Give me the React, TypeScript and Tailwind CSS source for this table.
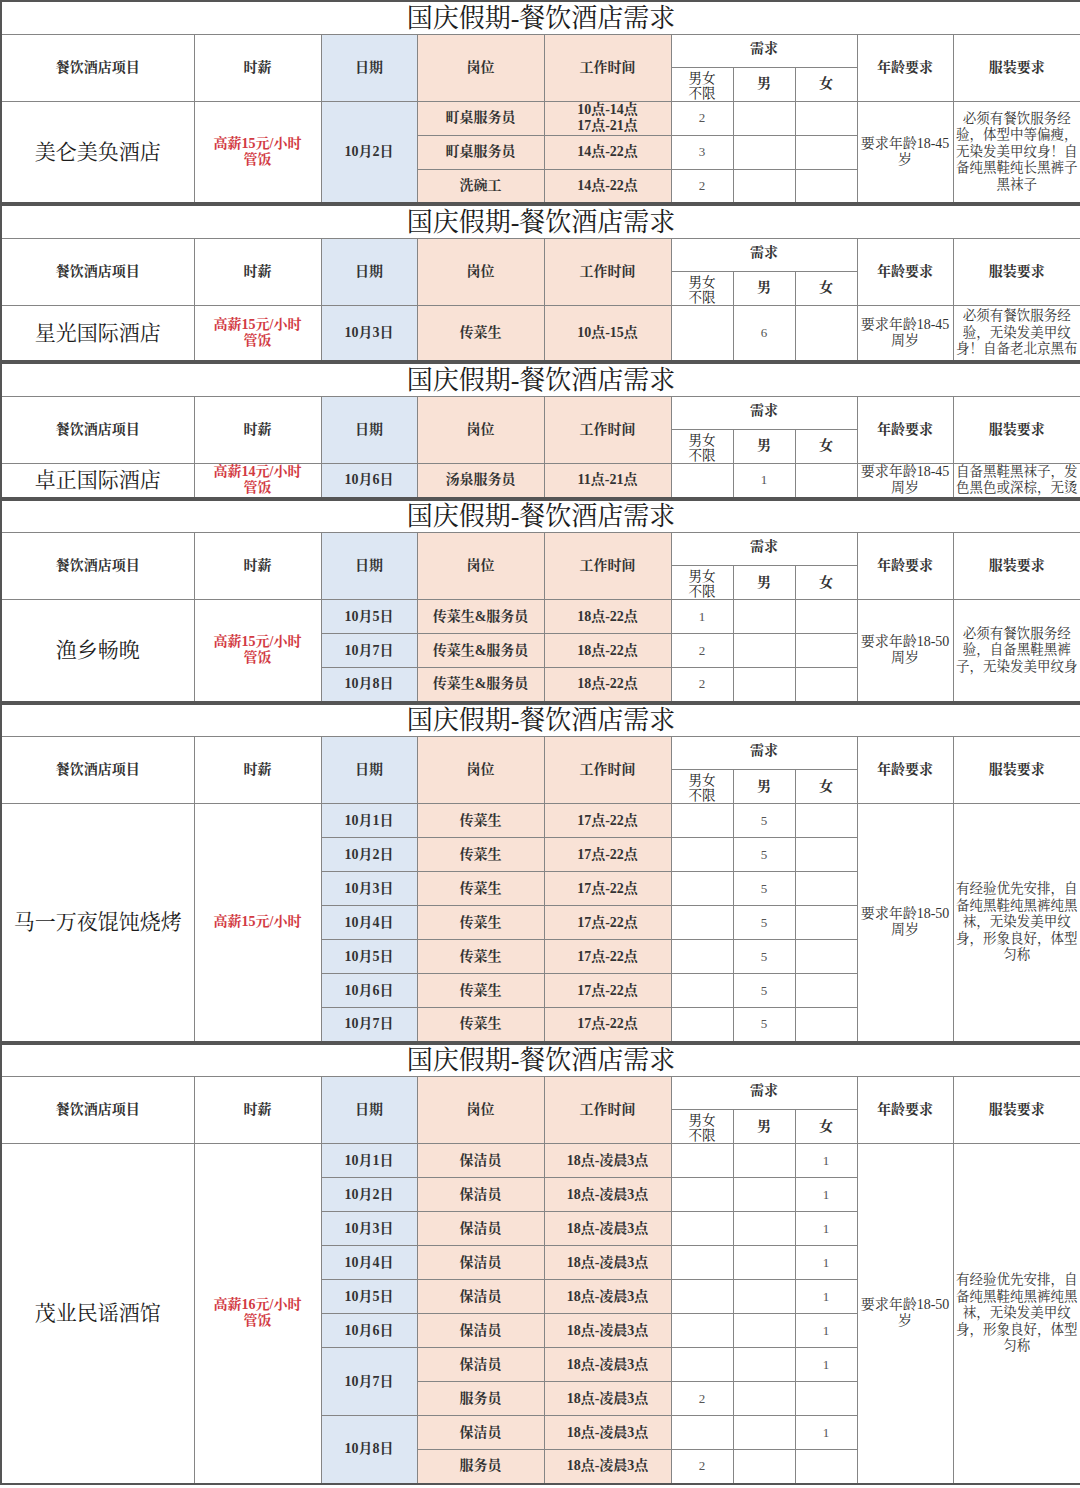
type Row = {
  date?: string;
  dateSpan?: number;
  pos: string;
  time: string[];
  any?: string;
  male?: string;
  female?: string;
};

type Section = {
  name: string;
  pay: string[];
  rows: Row[];
  rowH: string;
  age: string[];
  dress: string[];
};

const dressLong = ["有经验优先安排，自", "备纯黑鞋纯黑裤纯黑", "袜，无染发美甲纹", "身，形象良好，体型", "匀称"];

const sections: Section[] = [
  {
    name: "美仑美奂酒店",
    pay: ["高薪15元/小时", "管饭"],
    rowH: "h-[34px]",
    rows: [
      { date: "10月2日", dateSpan: 3, pos: "町桌服务员", time: ["10点-14点", "17点-21点"], any: "2" },
      { pos: "町桌服务员", time: ["14点-22点"], any: "3" },
      { pos: "洗碗工", time: ["14点-22点"], any: "2" },
    ],
    age: ["要求年龄18-45", "岁"],
    dress: ["必须有餐饮服务经", "验，体型中等偏瘦，", "无染发美甲纹身！自", "备纯黑鞋纯长黑裤子", "黑袜子"],
  },
  {
    name: "星光国际酒店",
    pay: ["高薪15元/小时", "管饭"],
    rowH: "h-[56px]",
    rows: [{ date: "10月3日", pos: "传菜生", time: ["10点-15点"], male: "6" }],
    age: ["要求年龄18-45", "周岁"],
    dress: ["必须有餐饮服务经", "验，无染发美甲纹", "身！自备老北京黑布"],
  },
  {
    name: "卓正国际酒店",
    pay: ["高薪14元/小时", "管饭"],
    rowH: "h-[33px]",
    rows: [{ date: "10月6日", pos: "汤泉服务员", time: ["11点-21点"], male: "1" }],
    age: ["要求年龄18-45", "周岁"],
    dress: ["自备黑鞋黑袜子，发", "色黑色或深棕，无烫"],
  },
  {
    name: "渔乡畅晚",
    pay: ["高薪15元/小时", "管饭"],
    rowH: "h-[34px]",
    rows: [
      { date: "10月5日", pos: "传菜生&服务员", time: ["18点-22点"], any: "1" },
      { date: "10月7日", pos: "传菜生&服务员", time: ["18点-22点"], any: "2" },
      { date: "10月8日", pos: "传菜生&服务员", time: ["18点-22点"], any: "2" },
    ],
    age: ["要求年龄18-50", "周岁"],
    dress: ["必须有餐饮服务经", "验，自备黑鞋黑裤", "子，无染发美甲纹身"],
  },
  {
    name: "马一万夜馄饨烧烤",
    pay: ["高薪15元/小时"],
    rowH: "h-[34px]",
    rows: ["10月1日", "10月2日", "10月3日", "10月4日", "10月5日", "10月6日", "10月7日"].map((d) => ({
      date: d,
      pos: "传菜生",
      time: ["17点-22点"],
      male: "5",
    })),
    age: ["要求年龄18-50", "周岁"],
    dress: dressLong,
  },
  {
    name: "茂业民谣酒馆",
    pay: ["高薪16元/小时", "管饭"],
    rowH: "h-[34px]",
    rows: [
      ...["10月1日", "10月2日", "10月3日", "10月4日", "10月5日", "10月6日"].map((d) => ({
        date: d,
        pos: "保洁员",
        time: ["18点-凌晨3点"],
        female: "1",
      })),
      { date: "10月7日", dateSpan: 2, pos: "保洁员", time: ["18点-凌晨3点"], female: "1" },
      { pos: "服务员", time: ["18点-凌晨3点"], any: "2" },
      { date: "10月8日", dateSpan: 2, pos: "保洁员", time: ["18点-凌晨3点"], female: "1" },
      { pos: "服务员", time: ["18点-凌晨3点"], any: "2" },
    ],
    age: ["要求年龄18-50", "岁"],
    dress: dressLong,
  },
];

const cell = "border border-[#858585] p-0 text-center align-middle";
const head = `${cell} text-[14px] leading-[16px] font-bold text-[#333]`;
const blue = "bg-[#dde7f3]";
const peach = "bg-[#f9e2d6]";

function Lines({ lines, className }: { lines: string[]; className?: string }) {
  return (
    <div className={className}>
      {lines.map((l, i) => (
        <div key={i} className="whitespace-nowrap">
          {l}
        </div>
      ))}
    </div>
  );
}

function Block({ s }: { s: Section }) {
  const n = s.rows.length;
  return (
    <table className="w-[1080px] table-fixed border-collapse border-2 border-[#555]">
      <colgroup>
        <col className="w-[193px]" />
        <col className="w-[127px]" />
        <col className="w-[96px]" />
        <col className="w-[127px]" />
        <col className="w-[127px]" />
        <col className="w-[62px]" />
        <col className="w-[62px]" />
        <col className="w-[62px]" />
        <col className="w-[96px]" />
        <col className="w-[128px]" />
      </colgroup>
      <tbody>
        <tr className="h-[33px]">
          <td colSpan={10} className={`${cell} pt-[2px] text-[26px] leading-[26px] text-[#1c1c1c]`}>
            国庆假期-餐饮酒店需求
          </td>
        </tr>
        <tr className="h-[33px]">
          <th rowSpan={2} className={head}>餐饮酒店项目</th>
          <th rowSpan={2} className={head}>时薪</th>
          <th rowSpan={2} className={`${head} ${blue}`}>日期</th>
          <th rowSpan={2} className={`${head} ${peach}`}>岗位</th>
          <th rowSpan={2} className={`${head} ${peach}`}>工作时间</th>
          <th colSpan={3} className={`${head} pb-1`}>需求</th>
          <th rowSpan={2} className={head}>年龄要求</th>
          <th rowSpan={2} className={head}>服装要求</th>
        </tr>
        <tr className="h-[33px]">
          <th className={`${cell} pt-[3px] text-[13.5px] font-normal leading-[15px] text-[#222]`}>
            男女
            <br />
            不限
          </th>
          <th className={head}>男</th>
          <th className={head}>女</th>
        </tr>
        {s.rows.map((r, i) => (
          <tr key={i} className={s.rowH}>
            {i === 0 && (
              <>
                <td rowSpan={n} className={`${cell} text-[21px] leading-[24px] text-[#1c1c1c]`}>
                  {s.name}
                </td>
                <td rowSpan={n} className={`${cell} text-[14px] font-bold leading-[16px] text-[#d23a43]`}>
                  <Lines lines={s.pay} />
                </td>
              </>
            )}
            {r.date && (
              <td rowSpan={r.dateSpan ?? 1} className={`${cell} ${blue} text-[14px] leading-[16px] font-bold text-[#333]`}>
                {r.date}
              </td>
            )}
            <td className={`${cell} ${peach} text-[14px] leading-[16px] font-bold text-[#333]`}>{r.pos}</td>
            <td className={`${cell} ${peach} text-[14px] font-bold leading-[16px] text-[#333]`}>
              <Lines lines={r.time} />
            </td>
            <td className={`${cell} text-[13px] leading-[16px] text-[#555]`}>{r.any ?? ""}</td>
            <td className={`${cell} text-[13px] leading-[16px] text-[#555]`}>{r.male ?? ""}</td>
            <td className={`${cell} text-[13px] leading-[16px] text-[#555]`}>{r.female ?? ""}</td>
            {i === 0 && (
              <>
                <td rowSpan={n} className={`${cell} text-[14px] leading-[16px] text-[#333]`}>
                  <Lines lines={s.age} />
                </td>
                <td rowSpan={n} className={`${cell} overflow-hidden text-[13.5px] leading-[16.5px] text-[#333]`}>
                  <Lines lines={s.dress} />
                </td>
              </>
            )}
          </tr>
        ))}
      </tbody>
    </table>
  );
}

export default function App() {
  return (
    <div className="w-[1080px] bg-white font-['Liberation_Serif','Noto_Serif_CJK_SC','Noto_Sans_CJK_SC',serif]">
      {sections.map((s, i) => (
        <Block key={i} s={s} />
      ))}
    </div>
  );
}
